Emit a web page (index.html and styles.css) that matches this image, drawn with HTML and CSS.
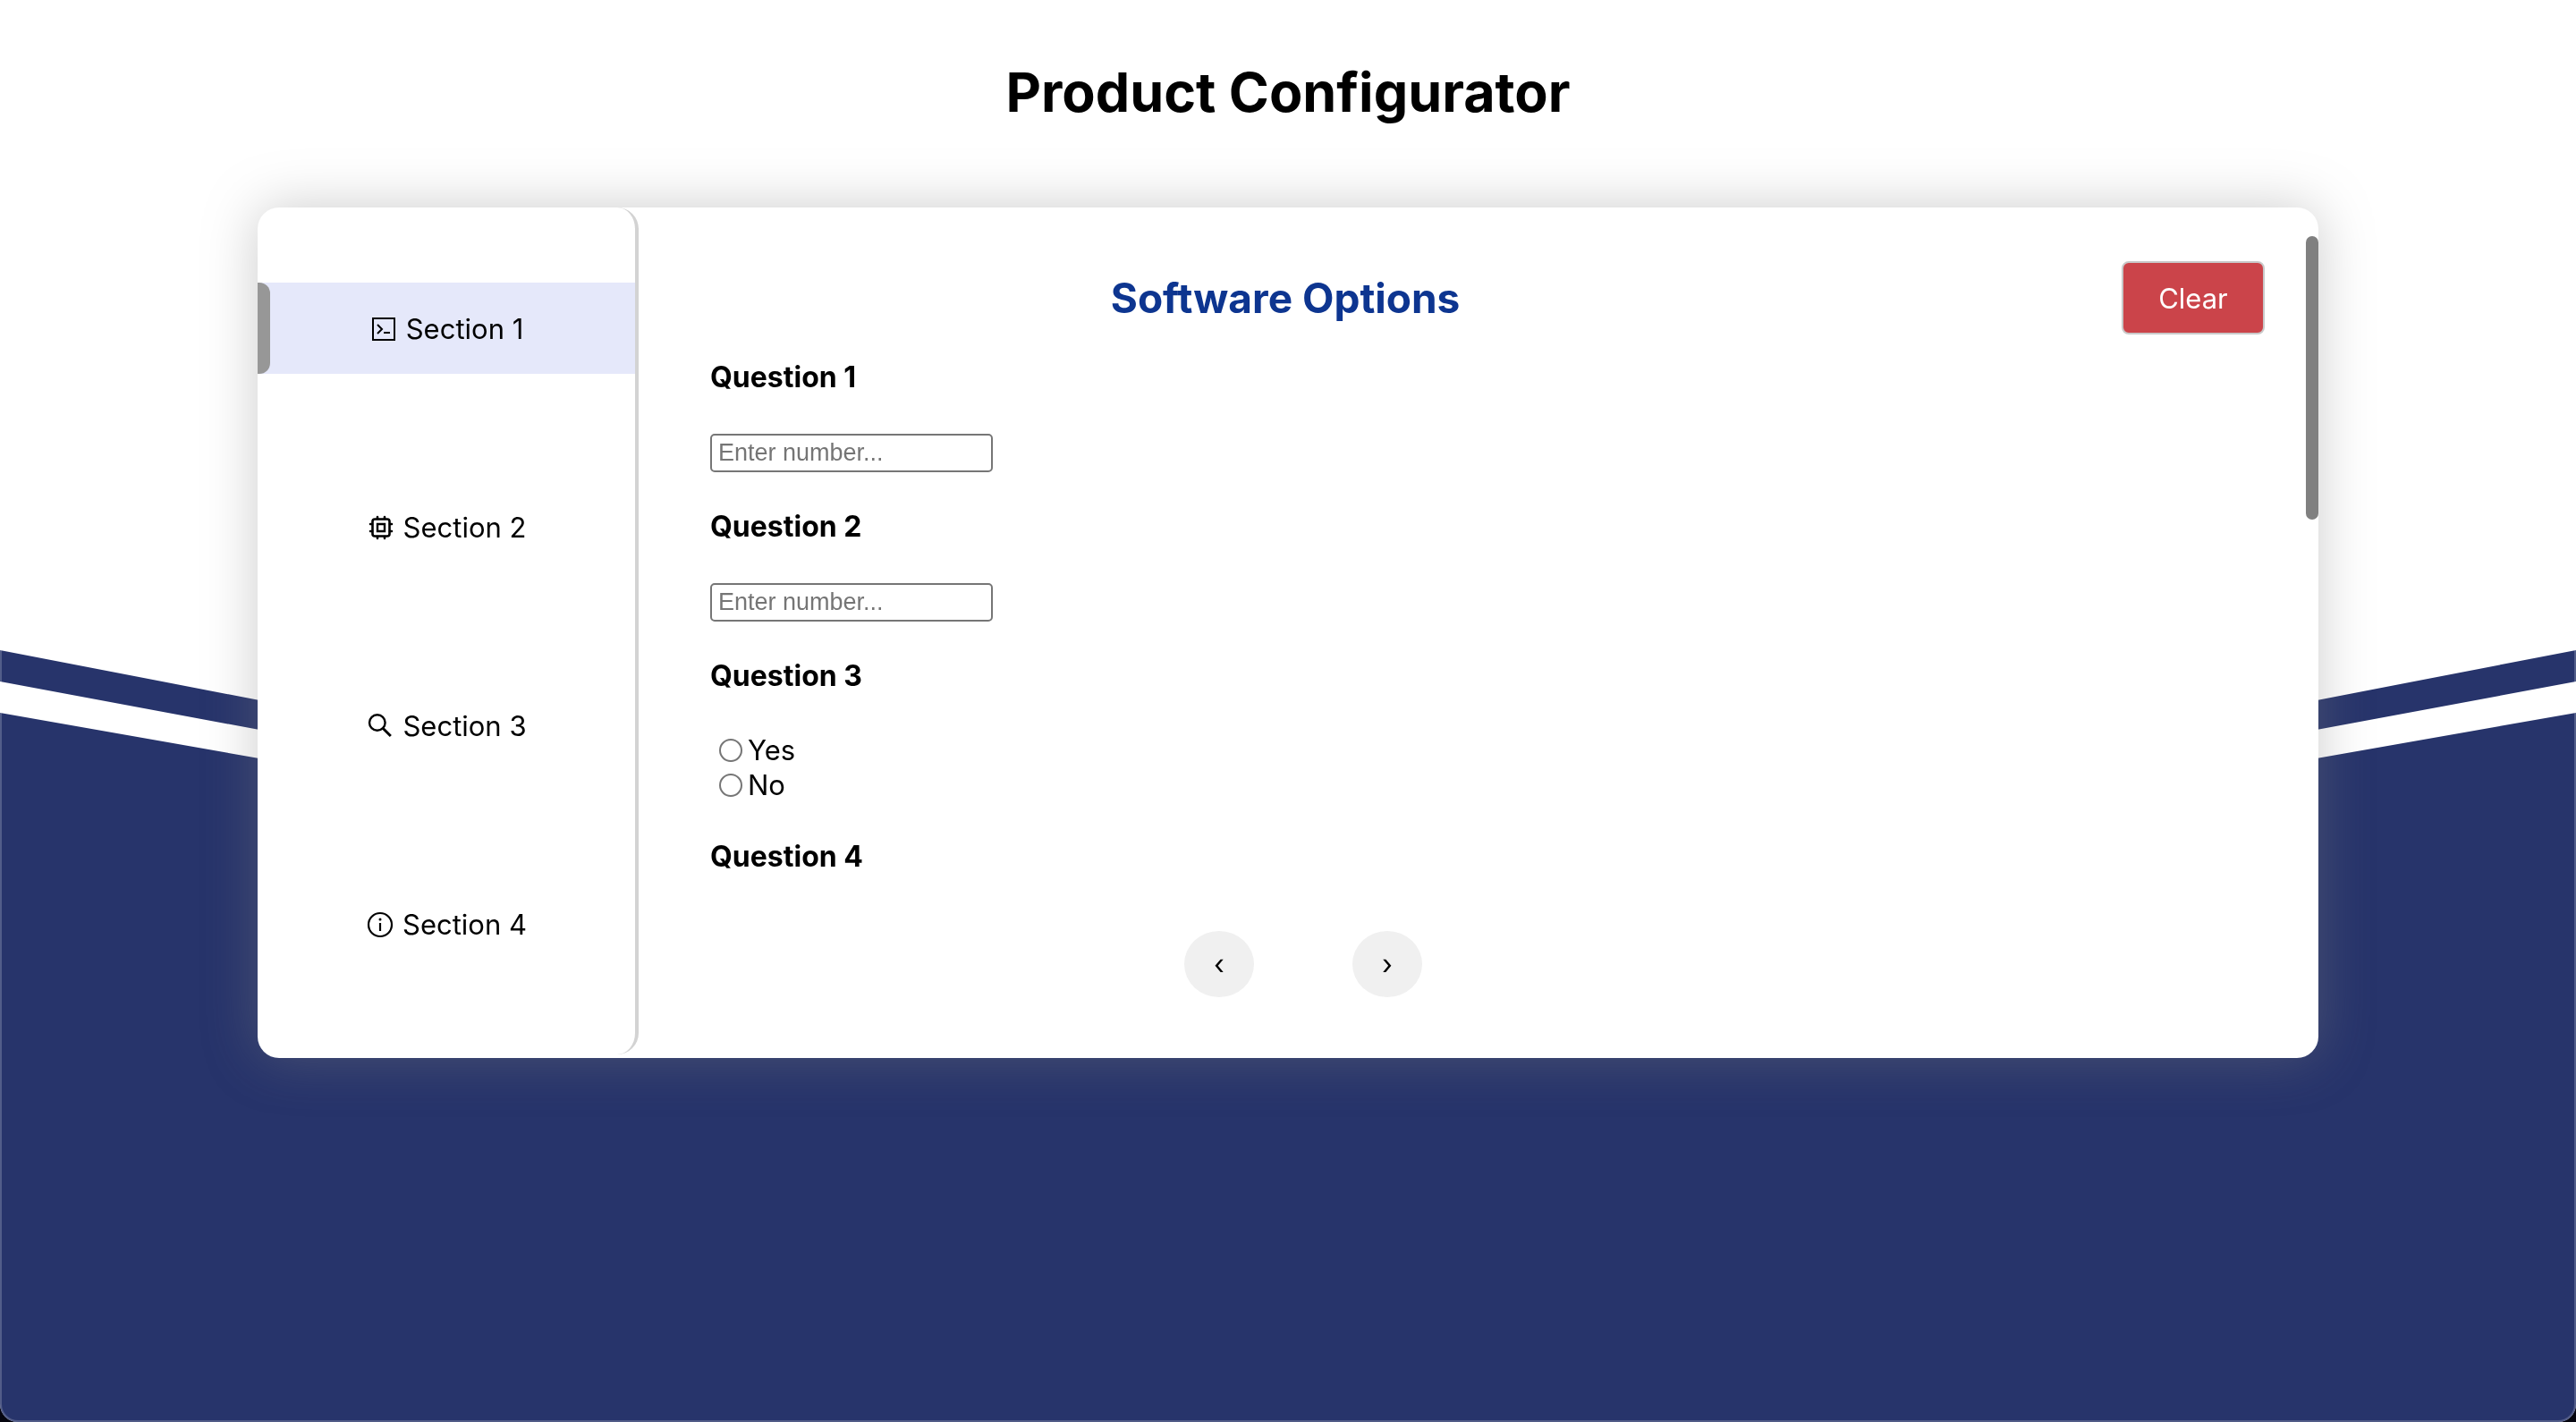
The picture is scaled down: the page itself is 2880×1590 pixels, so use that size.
FILE: index.html
```html
<!DOCTYPE html>
<html lang="en">
<head>
  <meta charset="utf-8">
  <meta name="viewport" content="width=device-width, initial-scale=1">
  <title>Product Configurator</title>
  <link rel="stylesheet" href="styles.css">
</head>
<body>
  <div class="backdrop" aria-hidden="true">
    <svg class="backdrop-art" viewBox="0 0 2880 1590" preserveAspectRatio="none">
      <path d="M0 727 L1440 1005 L2880 727 V762 L1440 1030 L0 762 Z"/>
      <path d="M0 797 L1440 1050 L2880 797 V1590 H0 Z"/>
    </svg>
  </div>

  <h1 class="page-title">Product Configurator</h1>

  <div class="card">
    <nav class="sidebar" aria-label="Sections">
      <button class="section-link active" type="button">
        <svg class="icon" viewBox="0 0 32 32" fill="none" stroke="currentColor" stroke-width="2">
          <path d="M4 4h24v24H4z"/>
          <path d="M9 11l5 5-5 5M16 20h7"/>
        </svg>
        Section 1
      </button>
      <button class="section-link" type="button">
        <svg class="icon" viewBox="0 0 32 32" fill="none" stroke="currentColor" stroke-width="2.6" stroke-linecap="round">
          <rect x="6.5" y="6.5" width="19" height="19" rx="2.5"/>
          <path d="M12 12h8v8h-8z" stroke-width="2.4"/>
          <path d="M12 4v2M20 4v2M12 26v2M20 26v2M4 12h2M4 20h2M26 12h2M26 20h2"/>
        </svg>
        Section 2
      </button>
      <button class="section-link" type="button">
        <svg class="icon" viewBox="0 0 32 32" fill="none" stroke="currentColor" stroke-width="2.4">
          <circle cx="12.8" cy="12" r="8.8"/>
          <path d="M18.8 18l9 9" stroke-width="3"/>
        </svg>
        Section 3
      </button>
      <button class="section-link" type="button">
        <svg class="icon" viewBox="0 0 32 32" fill="none" stroke="currentColor" stroke-width="2.2">
          <circle cx="16" cy="16" r="13"/>
          <path d="M16 14v9"/>
          <circle cx="16" cy="10" r="1.5" fill="currentColor" stroke="none"/>
        </svg>
        Section 4
      </button>
    </nav>

    <main class="panel">
      <header class="panel-header">
        <h2 class="panel-title">Software Options</h2>
        <button class="clear" type="button">Clear</button>
      </header>

      <form class="questions">
        <div class="question">
          <label class="question-title" for="q1">Question 1</label>
          <input class="number" id="q1" type="text" inputmode="numeric" placeholder="Enter number...">
        </div>
        <div class="question">
          <label class="question-title" for="q2">Question 2</label>
          <input class="number" id="q2" type="text" inputmode="numeric" placeholder="Enter number...">
        </div>
        <div class="question" role="radiogroup" aria-labelledby="q3">
          <h3 class="question-title" id="q3">Question 3</h3>
          <div class="options">
            <label class="option"><input class="radio" type="radio" name="q3" value="yes">Yes</label>
            <label class="option"><input class="radio" type="radio" name="q3" value="no">No</label>
          </div>
        </div>
        <div class="question">
          <h3 class="question-title">Question 4</h3>
        </div>
      </form>

      <div class="pager">
        <button class="pager-button" type="button" aria-label="Previous">‹</button>
        <button class="pager-button" type="button" aria-label="Next">›</button>
      </div>
      <div class="scroll-thumb" aria-hidden="true"></div>
    </main>
  </div>
</body>
</html>
```
FILE: styles.css
```css
* {
  box-sizing: border-box;
}

html {
  background: #05050f;
}

body {
  margin: 0;
  min-height: 100vh;
  color: #000;
  font-family: Inter, "Liberation Sans", sans-serif;
  font-size: 31px;
  line-height: 38px;
}

h1, h2, h3 {
  margin: 0;
}

button {
  font: inherit;
  color: inherit;
  cursor: pointer;
}

/* Page background */
.backdrop {
  position: fixed;
  inset: 0;
  z-index: -1;
  overflow: hidden;
  background: #fff;
  border-radius: 0 0 20px 20px;
}

.backdrop::after {
  content: "";
  position: absolute;
  inset: 0;
  border: 2px solid rgba(255, 255, 255, 0.2);
  border-top: 0;
  border-radius: 0 0 20px 20px;
}

.backdrop-art {
  display: block;
  width: 100%;
  height: 100%;
  fill: #27346b;
}

.page-title {
  padding: 63px 0 89px;
  font-size: 61px;
  line-height: 80px;
  text-align: center;
}

/* Card */
.card {
  display: flex;
  width: 80%;
  margin: 0 auto;
  background: #fff;
  border-radius: 24px;
  box-shadow: 0 0 60px rgba(128, 128, 128, 0.4);
}

.sidebar {
  display: flex;
  flex-direction: column;
  gap: 120px;
  width: 426px;
  flex-shrink: 0;
  margin-bottom: 4px;
  padding-top: 84px;
  border-right: 4px solid #d3d3d3;
  border-radius: 24px;
}

.section-link {
  display: flex;
  align-items: center;
  justify-content: center;
  gap: 9px;
  height: 102px;
  padding: 2px 0 0;
  border: 0;
  background: none;
}

.section-link.active {
  position: relative;
  background: #e5e8fa;
}

.section-link.active::before {
  content: "";
  position: absolute;
  inset: 0 auto 0 0;
  width: 14px;
  background: #979797;
  border-radius: 0 12px 12px 0;
}

.icon {
  width: 32px;
  height: 32px;
}

/* Panel */
.panel {
  position: relative;
  flex: 1;
  padding: 60px 60px 68px 80px;
}

.panel-header {
  display: grid;
  grid-template-columns: 74% 1fr;
  align-items: center;
}

.panel-title {
  color: #0d3590;
  font-size: 46px;
  line-height: 58px;
  text-align: center;
}

.clear {
  justify-self: end;
  width: 160px;
  height: 82px;
  padding: 2px 0 0;
  border: 2px solid #c9c9c9;
  border-radius: 8px;
  background: #cb444a;
  color: #fff;
}

.questions {
  display: flex;
  flex-direction: column;
  gap: 42px;
  margin-top: 29px;
}

.question {
  display: flex;
  flex-direction: column;
  align-items: flex-start;
  gap: 44px;
}

.question-title {
  font-size: 32px;
  font-weight: 700;
}

.number {
  width: 316px;
  height: 43px;
  padding: 0 7px;
  border: 2px solid #767676;
  border-radius: 5px;
  background: #fff;
  font-family: "Liberation Sans", Arial, sans-serif;
  font-size: 27px;
}

.number::placeholder {
  color: #757575;
}

.option {
  display: flex;
  align-items: center;
  gap: 6px;
  height: 39px;
  padding-left: 10px;
}

.radio {
  appearance: none;
  width: 26px;
  height: 26px;
  margin: 0;
  border: 2px solid #767676;
  border-radius: 50%;
  background: #fff;
}

.radio:checked {
  background: radial-gradient(#0075ff 50%, #fff 55%);
}

.pager {
  display: flex;
  justify-content: center;
  gap: 110px;
  width: 74%;
  margin-top: 64px;
  padding-left: 40px;
}

.pager-button {
  width: 78px;
  height: 74px;
  padding: 0;
  border: 0;
  border-radius: 50%;
  background: #f0f0f0;
}

.scroll-thumb {
  position: absolute;
  top: 32px;
  right: 0;
  width: 14px;
  height: 317px;
  border-radius: 7px;
  background: #808080;
}
```
